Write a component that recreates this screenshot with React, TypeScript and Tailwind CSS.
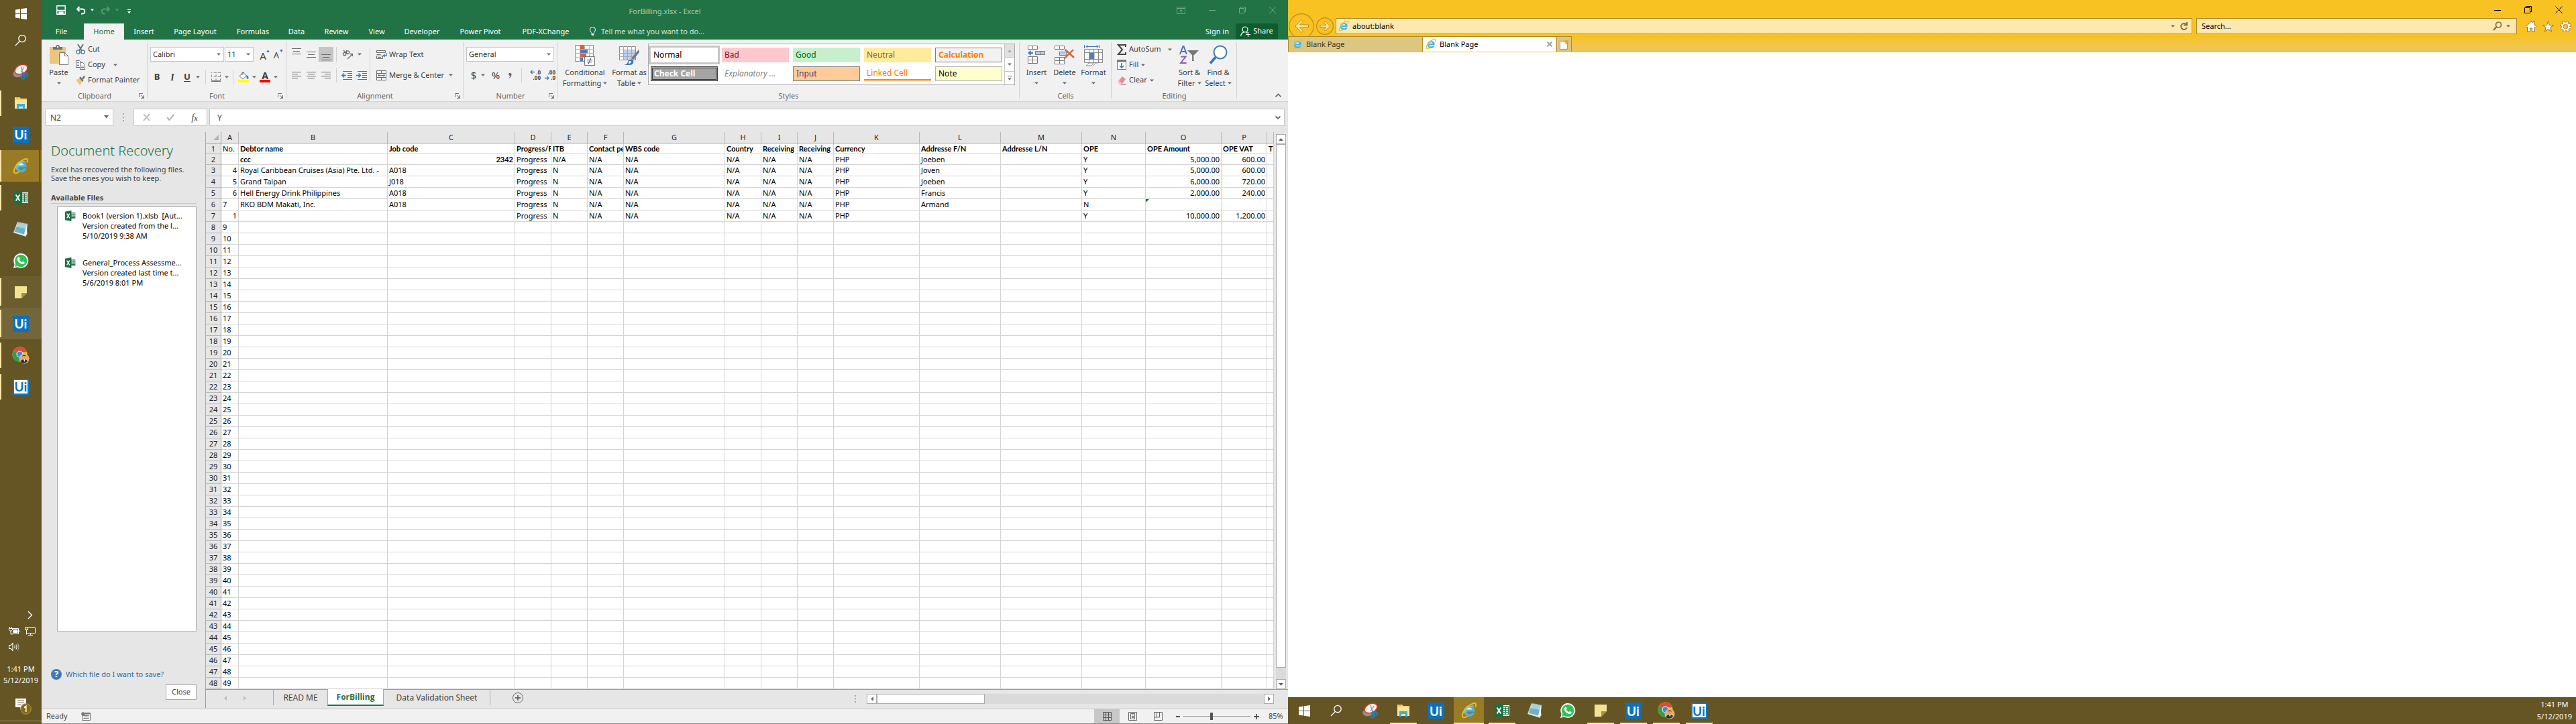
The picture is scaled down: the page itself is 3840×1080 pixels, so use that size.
import React from "react";

/* ---------- small drawing helpers ---------- */

type IconProps = { className?: string };

const Caret = ({ className = "" }: IconProps) => (
  <svg className={`shrink-0 ${className}`} width="6" height="4" viewBox="0 0 6 4" fill="#6a6a6a">
    <path d="M0 .5h6L3 3.8z" />
  </svg>
);

const VSep = ({ className = "" }: IconProps) => <span className={`w-px shrink-0 bg-[#d2d2d2] ${className}`} />;

const Launcher = () => (
  <svg width="8" height="8" viewBox="0 0 8 8" fill="none" stroke="#777" strokeWidth="1">
    <path d="M.5 6V.5H6M3 3l3 3M7.5 3v4.5H3" />
    <path d="M7.5 4.5v3h-3z" fill="#777" />
  </svg>
);

const WindowsLogo = ({ className = "" }: IconProps) => (
  <svg className={className} width="17" height="17" viewBox="0 0 17 17" fill="#fff">
    <path d="M0 2.4 7 1.4v6.6H0zM8 1.3 17 0v8H8zM0 9h7v6.6l-7-1zM8 9h9v8l-9-1.3z" />
  </svg>
);

const SearchGlyph = () => (
  <svg width="18" height="18" viewBox="0 0 18 18" fill="none" stroke="#fff" strokeWidth="1.3">
    <circle cx="11" cy="6.5" r="5.2" />
    <path d="M7.4 10.4 1 17" />
  </svg>
);

const SnipIcon = () => (
  <svg width="24" height="24" viewBox="0 0 24 24">
    <ellipse cx="10" cy="13" rx="10" ry="6.5" transform="rotate(-25 10 13)" fill="#9a8f86" />
    <ellipse cx="12.5" cy="8.5" rx="10" ry="6.5" transform="rotate(-25 12.500 8.500)" fill="#f5f2f2" stroke="#d8392f" strokeWidth="1.6" />
    <path d="M12 4l4 12M17 5l-5 8" stroke="#8b9099" strokeWidth="1.2" />
    <circle cx="15" cy="20.500" r="2.300" fill="none" stroke="#2a79b8" strokeWidth="2" />
    <circle cx="20" cy="16.500" r="2.300" fill="none" stroke="#2a79b8" strokeWidth="2" />
    <path d="M14 13.500l4 2M13.500 14.500l1.500 3" stroke="#2a79b8" strokeWidth="2" />
  </svg>
);

const FolderIcon = () => (
  <svg width="20" height="20" viewBox="0 0 20 20">
    <path d="M1 1h7l2 2h9v14H1z" fill="#f3d573" />
    <path d="M3 1h4v2H3z" fill="#f6b80e" />
    <path d="M1 5h18v13H1z" fill="#fde49a" />
    <path d="M4 19v-8h12v8h-3v-4H7v4z" fill="#31b1ea" />
  </svg>
);

const UiIcon = ({ inverse = false }: { inverse?: boolean }) => (
  <span
    className={
      inverse
        ? "flex h-6 w-6 items-center justify-center border-2 border-[#0a78c8] bg-white font-['Lato'] text-[19px] font-bold leading-none text-[#0a72bd]"
        : "flex h-6 w-6 items-center justify-center bg-[#0a72bd] font-['Lato'] text-[19px] font-bold leading-none text-white"
    }
  >
    Ui
  </span>
);

const IeIcon = ({ size = 24 }: { size?: number }) => (
  <svg className="shrink-0" width={size} height={size} viewBox="0 0 24 24" fill="none">
    <path d="M20.500 13.500H8.300c.4 2.400 2 3.800 4.300 3.800 1.700 0 3-.7 3.800-2h4c-1.200 3.500-4 5.600-7.800 5.600-5 0-8.400-3.400-8.400-8.200 0-4.900 3.500-8.500 8.400-8.500 5 0 8.300 3.500 7.900 9.300z" fill="#45b4e6" />
    <path d="M8.400 10.600h7.800c-.3-2-1.700-3.100-3.800-3.100-2.200 0-3.600 1.200-4 3.100z" fill="#e8f6fd" />
    <path d="M5.500 15.500C7.500 9.500 12 5 18.500 4.800" stroke="#9fdcf5" strokeWidth="1" />
    <path d="M3.200 22.200C0 20.500 2.500 13 8.500 7.200 14 2 20.500-.3 22 2c.6 1 .2 2.700-.8 4.600" stroke="#f4c01c" strokeWidth="1.900" />
    <path d="M3.200 22.200c1.600.8 4.200-.5 6.200-1.900" stroke="#f4c01c" strokeWidth="1.700" />
  </svg>
);

const ExcelIcon = ({ size = 22 }: { size?: number }) => (
  <svg className="shrink-0" width={size} height={size} viewBox="0 0 22 22">
    <path d="M11 3h11v16H11z" fill="#fff" />
    <path d="M12.500 4.500h8.500v13h-8.500z" fill="#217346" />
    <path d="M13 6h3v1.500h-3zM17 6h3v1.500h-3zM13 9h3v1.500h-3zM17 9h3v1.500h-3zM13 12h3v1.500h-3zM17 12h3v1.500h-3zM13 15h3v1.500h-3zM17 15h3v1.500h-3z" fill="#fff" />
    <path d="M0 2.300 13 0v22L0 19.700z" fill="#1d6f42" />
    <path d="M3.600 6.500 9.400 15.500M9.400 6.500 3.600 15.500" stroke="#fff" strokeWidth="1.900" />
  </svg>
);

const NotepadIcon = () => (
  <svg width="24" height="24" viewBox="0 0 24 24">
    <path d="M7 1 22 4 20 23 1 17z" fill="#dfe6e8" />
    <path d="M8 2.500 20.500 5 17 19.500 2.500 15.500z" fill="#6fb2c4" />
    <path d="M8 2.500 20.500 5 19 11 5.500 8.500z" fill="#a3d3de" />
    <path d="M7.500 1.200 21.500 4" stroke="#8d8d8d" strokeWidth="1.400" strokeDasharray="1.500 1" />
    <path d="M20.500 5 21.500 20 17 19.500z" fill="#f6f4ee" />
  </svg>
);

const WhatsAppIcon = () => (
  <svg width="24" height="24" viewBox="0 0 24 24">
    <path d="M1 23l1.600-5.800A11 11 0 1 1 7 21.600z" fill="#fff" />
    <circle cx="12.200" cy="11.900" r="9.200" fill="#2fc355" />
    <path d="M3 21l1.200-4.200 3 3z" fill="#2fc355" />
    <path d="M8.800 6.600c.5-.1.900 0 1.100.5l.8 1.900c.1.300 0 .6-.9 1.600.9 1.700 2.200 2.900 4 3.600.9-1.200 1.100-1.400 1.500-1.200l2 1c.4.2.5.4.4.9-.2 1.500-1.600 2.400-3 2.200-4-.6-7.500-4.200-8-7.200-.2-1.500 1-3 2.100-3.300z" fill="#fff" />
  </svg>
);

const StickyIcon = () => (
  <svg width="18" height="18" viewBox="0 0 18 18">
    <path d="M0 0h18v10l-8 8H0z" fill="#f2e493" />
    <path d="M18 10h-8v8z" fill="#a09153" />
  </svg>
);

const ChromeIcon = () => (
  <svg width="26" height="26" viewBox="0 0 26 26">
    <circle cx="11.500" cy="11.500" r="11" fill="#f6c21c" />
    <path d="M11.500 11.500 2 6A11 11 0 0 1 22 8.300H11.500z" fill="#dd4b3e" />
    <path d="M2 6a11 11 0 0 0 8.500 16.400L15 14z" fill="#2ba24c" />
    <circle cx="11.500" cy="11.500" r="5" fill="#fff" />
    <circle cx="11.500" cy="11.500" r="4" fill="#4285f4" />
    <circle cx="18" cy="18" r="7.600" fill="#e7b163" />
    <path d="M12.500 23c.8-3 2.700-4 5.500-4s4 1 5 3a7.600 7.600 0 0 1-10.500 1z" fill="#22304f" />
    <path d="M17 19h2.500l-1 4z" fill="#fff" />
    <circle cx="18" cy="15.500" r="2.700" fill="#d6a184" />
    <path d="M15.200 15c0-3 5.600-3 5.600 0l-1-1h-3.600z" fill="#2c2320" />
  </svg>
);

/* ---------- task bars ---------- */

type TaskItem = { name: string; icon: React.ReactNode; open?: boolean; active?: boolean; tint?: string };

const tasks: TaskItem[] = [
  { name: "Snipping Tool", icon: <SnipIcon /> },
  { name: "File Explorer", icon: <FolderIcon />, open: true },
  { name: "UiPath Studio", icon: <UiIcon /> },
  { name: "Internet Explorer", icon: <IeIcon />, open: true, active: true },
  { name: "Excel", icon: <ExcelIcon />, open: true },
  { name: "Notepad", icon: <NotepadIcon /> },
  { name: "WhatsApp", icon: <WhatsAppIcon /> },
  { name: "Sticky Notes", icon: <StickyIcon />, open: true, tint: "bg-[#6c5d2f]" },
  { name: "UiPath", icon: <UiIcon />, open: true, tint: "bg-[#73663a]" },
  { name: "Chrome", icon: <ChromeIcon />, open: true },
  { name: "UiPath Robot", icon: <UiIcon inverse />, open: true },
];

const SideTaskbar = () => (
  <nav className="flex w-[62px] shrink-0 flex-col bg-[#655524] text-white">
    <button aria-label="Start" className="flex h-10 items-center justify-center">
      <WindowsLogo />
    </button>
    <button aria-label="Search" className="mb-[3px] flex h-10 items-center justify-center">
      <SearchGlyph />
    </button>
    {tasks.map((t) => (
      <button
        key={t.name}
        aria-label={t.name}
        className={`flex h-[47px] items-center ${t.active ? "bg-[#997a25]" : t.tint ?? ""}`}
      >
        <span className={`w-[2px] ${t.open ? "bg-[#fde7ab]" : ""} ${t.active ? "h-[47px]" : t.tint ? "h-[41px]" : "h-[38px]"}`} />
        <span className={`flex flex-1 items-center justify-center ${t.active ? "pl-[2px]" : "pr-[2px]"}`}>{t.icon}</span>
        {t.active && <span className="h-[47px] w-[4px] border-l border-[#57481c] bg-[#806722]" />}
      </button>
    ))}
    <div className="mt-auto flex flex-col">
      <button aria-label="Show hidden icons" className="flex h-6 items-center justify-end pr-[13px]">
        <svg width="8" height="13" viewBox="0 0 8 13" fill="none" stroke="#fff" strokeWidth="1.300">
          <path d="M1 1l5.500 5.500L1 12" />
        </svg>
      </button>
      <div className="flex h-6 items-center gap-2 pl-[13px]">
        <svg width="16" height="12" viewBox="0 0 16 12" fill="none" stroke="#fff">
          <path d="M5.500 2.500h9v8h-9M1.500 0v2.500M4.500 0v2.500M.5 2.500h5v2L4 6H2L.5 4.500zM3 6v5h3" />
          <path d="M7 4.500h6v4H7z" fill="#fff" />
          <path d="M15.500 5v3" />
        </svg>
        <svg width="16" height="13" viewBox="0 0 16 13" fill="none" stroke="#fff">
          <path d="M5 1.500h10.500v8H3M.5.500h4v4h-4zM2.500 4.500v7M8.500 9.500v3M5 12.500h7" />
        </svg>
      </div>
      <div className="flex h-6 items-center pl-[13px]">
        <svg width="17" height="14" viewBox="0 0 17 14" fill="none" stroke="#fff" strokeWidth="1.100">
          <path d="M.5 4.500h2.500L6 1.500v11L3 9.500H.5zM8.500 5q1.500 2 0 4M10.700 3.500q3 3.500 0 7" />
          <path d="M13 1.500q4 5.500 0 11" opacity=".5" />
        </svg>
      </div>
      <div className="mt-3 text-center text-[11px] leading-[17px]">
        <div>1:41 PM</div>
        <div>5/12/2019</div>
      </div>
      <button aria-label="Notifications" className="mt-[17px] mb-[9px] flex h-[26px] items-center justify-center pl-2">
        <svg width="24" height="25" viewBox="0 0 24 25">
          <path d="M0 1h16v13H10l-3 3v-3H0z" fill="#fff" />
          <path d="M3 4.500h10M3 7.500h10M3 10.500h6" stroke="#655524" />
          <circle cx="15.500" cy="16.500" r="7.800" fill="#85690f" stroke="#a89a6c" />
          <path d="M13 14.500l2.800-2v8.500" fill="none" stroke="#fff" strokeWidth="1.700" />
        </svg>
      </button>
      <div className="h-[5px] border-t border-[#a39a7c]" />
    </div>
  </nav>
);

const BottomTaskbar = () => (
  <nav className="flex h-10 shrink-0 bg-[#655524] text-white">
    <button aria-label="Start" className="flex w-12 items-center justify-center">
      <WindowsLogo />
    </button>
    <button aria-label="Search" className="mr-[2px] flex w-12 items-center justify-center">
      <SearchGlyph />
    </button>
    {tasks.map((t) => (
      <button key={t.name} aria-label={t.name} className="flex w-[49px] flex-col items-center">
        <span className={`flex flex-1 items-center justify-center pt-[2px] ${t.active ? "w-[45px] bg-[#997a25]" : ""}`}>{t.icon}</span>
        <span className={`h-[2px] ${t.open ? "bg-[#fde7ab]" : ""} ${t.active ? "w-[45px]" : "w-10"}`} />
      </button>
    ))}
    <div className="ml-auto pr-[6px] pt-[2px] text-center text-[11px] leading-[18px]">
      <div>1:41 PM</div>
      <div>5/12/2019</div>
    </div>
  </nav>
);

/* ---------- Excel: title and ribbon ---------- */

const TitleBar = () => (
  <div className="grid h-[35px] grid-cols-[1fr_auto_1fr] items-center bg-[#217346]">
    <div className="flex items-center pb-[5px] pl-[22px]">
      <button aria-label="Save">
        <svg width="14" height="14" viewBox="0 0 14 14" fill="none" stroke="#fff" strokeWidth="1.400">
          <path d="M.8.800h12.400v12.400H.8zM.8 7.500h12.400" />
          <path d="M4 13v-3h6v3" fill="#fff" />
        </svg>
      </button>
      <button aria-label="Undo" className="ml-[15px] flex items-center gap-[7px]">
        <svg width="15" height="13" viewBox="0 0 15 13" fill="none" stroke="#fff" strokeWidth="2">
          <path d="M5.500 1 2 4.500 5.500 8M2 4.500h7.500c5 0 5 7 0 7H8" />
        </svg>
        <svg width="5" height="4" viewBox="0 0 6 4" fill="#fff"><path d="M0 0h6L3 4z" /></svg>
      </button>
      <button aria-label="Redo" className="ml-[10px] flex items-center gap-[7px] opacity-25">
        <svg width="15" height="13" viewBox="0 0 15 13" fill="none" stroke="#fff" strokeWidth="2">
          <path d="M9.500 1 13 4.500 9.500 8M13 4.500H5.500c-5 0-5 7 0 7H7" />
        </svg>
        <svg width="5" height="4" viewBox="0 0 6 4" fill="#fff"><path d="M0 0h6L3 4z" /></svg>
      </button>
      <button aria-label="Customize toolbar" className="ml-[13px] pt-1">
        <svg width="5" height="7" viewBox="0 0 5 7" fill="#fff"><path d="M0 0h5v1H0zM0 3h5L2.500 6.500z" /></svg>
      </button>
    </div>
    <div className="text-[11px] text-[#a3cbb2]">ForBilling.xlsx - Excel</div>
    <div className="flex items-center justify-end gap-[35px] pb-[5px] pr-[18px]">
      <button aria-label="Ribbon display options">
        <svg width="13" height="11" viewBox="0 0 13 11" fill="none" stroke="#75a888"><path d="M.5.500h12v10H.5zM.5 2.500h12M6.500 9V4.500M4.500 6.500l2-2 2 2" /></svg>
      </button>
      <button aria-label="Minimize">
        <svg width="10" height="10" viewBox="0 0 10 10" stroke="#75a888"><path d="M0 5.500h10" /></svg>
      </button>
      <button aria-label="Restore">
        <svg width="10" height="10" viewBox="0 0 10 10" fill="none" stroke="#75a888"><path d="M.5 2.500h7v7h-7zM2.500 2.500v-2h7v7h-2" /></svg>
      </button>
      <button aria-label="Close">
        <svg width="10" height="10" viewBox="0 0 10 10" stroke="#75a888"><path d="M0 0l10 10M10 0 0 10" /></svg>
      </button>
    </div>
  </div>
);

const tabs: [string, string][] = [
  ["Insert", "w-[59px]"],
  ["Page Layout", "w-[94px]"],
  ["Formulas", "w-[78px]"],
  ["Data", "w-[52px]"],
  ["Review", "w-[67px]"],
  ["View", "w-[53px]"],
  ["Developer", "w-[82px]"],
  ["Power Pivot", "w-[92px]"],
  ["PDF-XChange", "w-[103px]"],
];

const TabRow = () => (
  <div className="flex h-6 items-center bg-[#217346] text-[11px] text-white">
    <button className="w-[59px]">File</button>
    <button className="ml-1 h-6 w-[60px] bg-[#f1f1f1] text-[#217346]">Home</button>
    {tabs.map(([name, w]) => (
      <button key={name} className={`whitespace-nowrap ${w}`}>{name}</button>
    ))}
    <button className="ml-[14px] flex items-center gap-2 whitespace-nowrap text-[#d3e5da]">
      <svg width="9" height="14" viewBox="0 0 9 14" fill="none" stroke="#fff">
        <path d="M2.500 9.500C2.500 7.500.5 6.800.5 4.300a4 4 0 0 1 8 0c0 2.500-2 3.200-2 5.200zM2.500 11.500h4M3 13.500h3" />
      </svg>
      Tell me what you want to do...
    </button>
    <button className="ml-auto mr-[10px]">Sign in</button>
    <button className="mb-px mr-[15px] flex h-[23px] w-[63px] items-center justify-center gap-1 bg-[#0e5c2f]">
      <svg width="15" height="16" viewBox="0 0 15 16" fill="none" stroke="#fff" strokeWidth="1.200">
        <circle cx="7" cy="5" r="4" />
        <path d="M.7 15c0-3.500 1.800-5 4.300-6M9 9l1.500 1.500M8 12.500h7M11.500 9v7" />
      </svg>
      Share
    </button>
  </div>
);

const Group = ({
  label,
  className,
  launcher,
  children,
}: {
  label: string;
  className: string;
  launcher?: boolean;
  children: React.ReactNode;
}) => (
  <section className={`relative flex shrink-0 flex-col ${className}`}>
    <div className="flex h-[76px]">{children}</div>
    <div className="grid h-4 grid-cols-[1fr_auto_1fr] items-center text-[#666]">
      <span />
      <span>{label}</span>
      <span className="flex justify-end pr-[5px]">{launcher && <Launcher />}</span>
    </div>
    <span className="absolute right-0 top-1 h-[84px] w-px bg-[#d2d2d2]" />
  </section>
);

const BigButton = ({ icon, lines, className }: { icon: React.ReactNode; lines: [string, string]; className: string }) => (
  <button className={`flex shrink-0 flex-col items-center whitespace-nowrap pt-2 leading-4 ${className}`}>
    <span className="flex h-[33px] items-start">{icon}</span>
    <span>{lines[0]}</span>
    <span className="flex items-center gap-[3px]">
      {lines[1]}
      <Caret className={lines[1] ? "" : "mt-[6px]"} />
    </span>
  </button>
);

const Lines = ({ d }: { d: string }) => (
  <svg width="14" height="11" viewBox="0 0 14 11" stroke="#6b6b6b"><path d={d} /></svg>
);

const Clipboard = () => (
  <Group label="Clipboard" launcher className="w-[158px]">
    <BigButton
      className="w-[51px]"
      lines={["Paste", ""]}
      icon={
        <svg width="28" height="31" viewBox="0 0 28 31">
          <path d="M0 3h24v25H0z" fill="#ecc57e" />
          <path d="M5 3h4a3 3 0 0 1 6 0h4v4H5z" fill="#717171" />
          <circle cx="12" cy="3" r="1.200" fill="#fff" />
          <path d="M14.500 11.500h8l5 5v13h-13z" fill="#fff" stroke="#777" />
          <path d="M22.500 11.500v5h5" fill="none" stroke="#777" />
        </svg>
      }
    />
    <div className="flex flex-col pt-[3px]">
      <button className="flex h-[23px] items-center gap-1">
        <svg width="14" height="15" viewBox="0 0 14 15" fill="none">
          <path d="M3 0l6 9.500M11 0 5 9.500" stroke="#6b6b6b" strokeWidth="1.800" />
          <circle cx="3.500" cy="11.500" r="2.600" stroke="#3f7ab5" strokeWidth="1.300" />
          <circle cx="10.500" cy="11.500" r="2.600" stroke="#3f7ab5" strokeWidth="1.300" />
        </svg>
        Cut
      </button>
      <button className="flex h-[23px] items-center gap-1">
        <svg width="14" height="14" viewBox="0 0 14 14" fill="#fff" stroke="#6b6b6b">
          <path d="M.5.500h5l2 2v8h-7z" />
          <path d="M6.500 3.500h4l3 3v7h-7z" />
          <path d="M2 3.500h3M2 5.500h3M2 7.500h3M8 8.500h4M8 10.500h4" stroke="#3f7ab5" />
        </svg>
        Copy
        <Caret className="ml-2" />
      </button>
      <button className="flex h-[23px] items-center gap-1 whitespace-nowrap">
        <svg width="14" height="14" viewBox="0 0 14 14">
          <path d="M0 6l5-2 5 5-4 5z" fill="#ecc57e" />
          <path d="M5 3l2-1.500L11.500 7 10 9z" fill="#6b6b6b" />
          <path d="M9 4l3-4 2 1.500-3 4z" fill="#6b6b6b" />
        </svg>
        Format Painter
      </button>
    </div>
  </Group>
);

const selectCls =
  "h-[22px] w-full appearance-none border border-[#c6c6c6] bg-white pl-[3px] text-[#333] outline-none";

const Dropdown = ({ label, value, className }: { label: string; value: string; className: string }) => (
  <label className={`relative block ${className}`}>
    <select aria-label={label} className={selectCls} defaultValue={value}>
      <option>{value}</option>
    </select>
    <Caret className="pointer-events-none absolute right-[5px] top-[9px]" />
  </label>
);

const FontGroup = () => (
  <Group label="Font" launcher className="w-[207px]">
    <div className="flex flex-col gap-[9px] pt-[11px]">
      <div className="flex pl-1">
        <Dropdown label="Font" value="Calibri" className="w-[110px]" />
        <Dropdown label="Font size" value="11" className="ml-px w-[43px]" />
        <button aria-label="Increase font size" className="relative ml-1 w-5 text-[15px] leading-[24px]">
          A
          <svg className="absolute right-0 top-1" width="5" height="4" viewBox="0 0 5 4" fill="#3f7ab5"><path d="M0 4h5L2.500 0z" /></svg>
        </button>
        <button aria-label="Decrease font size" className="relative w-5 text-[13px] leading-[25px]">
          A
          <svg className="absolute right-0 top-1" width="5" height="4" viewBox="0 0 5 4" fill="#3f7ab5"><path d="M0 0h5L2.500 4z" /></svg>
        </button>
      </div>
      <div className="flex h-[22px] items-center pl-[2px]">
        <button className="w-6 text-[13px] font-bold">B</button>
        <button className="w-[22px] font-['Liberation_Serif'] text-[14px] font-bold italic">I</button>
        <button className="w-[22px] text-[13px] font-bold underline underline-offset-2">U</button>
        <Caret className="mx-[2px]" />
        <VSep className="mx-[6px] h-[22px]" />
        <button aria-label="Borders" className="flex w-[18px] justify-center">
          <svg width="14" height="14" viewBox="0 0 14 14" fill="none" stroke="#777">
            <path d="M.5 0v12M7 0v12M13.500 0v12M0 .5h14M0 6.500h14" strokeDasharray="1 1" />
            <path d="M0 13h14" stroke="#444" strokeWidth="1.500" />
          </svg>
        </button>
        <Caret className="mx-[4px]" />
        <VSep className="mx-[2px] h-[22px]" />
        <button aria-label="Fill color" className="flex w-[26px] justify-center">
          <svg width="16" height="16" viewBox="0 0 16 16">
            <path d="M0 12h16v4H0z" fill="#ffff00" />
            <path d="M2 6.500 7.500 1l5 5L7 11z" fill="#fff" stroke="#6b6b6b" />
            <path d="M6 5V1q1.500-1.500 2.500 0v3" fill="none" stroke="#6b6b6b" />
            <path d="M12 5q4 1 3.500 5l-2.500 1z" fill="#3f7ab5" />
          </svg>
        </button>
        <Caret />
        <button aria-label="Font color" className="flex w-[26px] flex-col items-center text-[14px] font-bold leading-[12px]">
          A
          <span className="h-1 w-4 bg-[#ff0000]" />
        </button>
        <Caret />
      </div>
    </div>
  </Group>
);

const AlignGroup = () => (
  <Group label="Alignment" launcher className="w-[264px]">
    <div className="flex gap-[9px] pl-[4px] pt-[11px]">
      <div className="flex flex-col gap-[9px]">
        <div className="flex h-[22px] items-center">
          <button aria-label="Top align" className="flex h-[22px] w-[22px] items-start justify-center pt-[2px]"><Lines d="M0 .5h14M2 4.500h10M0 8.500h14" /></button>
          <button aria-label="Middle align" className="flex h-[22px] w-[22px] items-center justify-center"><Lines d="M0 1.500h14M2 5.500h10M0 9.500h14" /></button>
          <button aria-label="Bottom align" className="flex h-[22px] w-[22px] items-end justify-center bg-[#c5c5c5] pb-[2px]"><Lines d="M0 2.500h14M2 6.500h10M0 10.500h14" /></button>
          <VSep className="mx-1 h-[22px]" />
          <button aria-label="Orientation" className="flex items-center gap-[7px] pl-1">
            <svg width="16" height="15" viewBox="0 0 16 15" fill="none" stroke="#6b6b6b" strokeWidth="1.300">
              <circle cx="3.500" cy="6.500" r="2.200" />
              <path d="M2 1l6 6M6 3l1-2M8 14l7-7M12 6.500h3.500V10" />
              <circle cx="8.500" cy="4" r="2.200" />
            </svg>
            <Caret />
          </button>
        </div>
        <div className="flex h-[22px] items-center">
          <button aria-label="Align left" className="flex w-[22px] justify-center"><Lines d="M0 .5h14M0 3.500h9M0 6.500h14M0 9.500h9" /></button>
          <button aria-label="Center" className="flex w-[22px] justify-center"><Lines d="M0 .5h14M2 3.500h10M0 6.500h14M2 9.500h10" /></button>
          <button aria-label="Align right" className="flex w-[22px] justify-center"><Lines d="M0 .5h14M5 3.500h9M0 6.500h14M5 9.500h9" /></button>
          <VSep className="mx-1 h-[22px]" />
          <button aria-label="Decrease indent" className="flex w-[22px] justify-center">
            <svg width="16" height="13" viewBox="0 0 16 13" fill="none" stroke="#6b6b6b"><path d="M2 .5h14M9 3.500h7M9 6.500h7M9 9.500h7M2 12.500h14" /><path d="M7 6.500H1M4 3.500 1 6.500l3 3" stroke="#3f7ab5" strokeWidth="1.600" /></svg>
          </button>
          <button aria-label="Increase indent" className="flex w-[22px] justify-center">
            <svg width="16" height="13" viewBox="0 0 16 13" fill="none" stroke="#6b6b6b"><path d="M2 .5h14M9 3.500h7M9 6.500h7M9 9.500h7M2 12.500h14" /><path d="M0 6.500h6M3.500 3.500l3 3-3 3" stroke="#3f7ab5" strokeWidth="1.600" /></svg>
          </button>
        </div>
      </div>
      <VSep className="-ml-2 h-[53px]" />
      <div className="flex flex-col gap-[9px]">
        <button className="flex h-[22px] items-center gap-[3px]">
          <svg width="16" height="15" viewBox="0 0 16 15" fill="none" stroke="#6b6b6b">
            <path d="M.5 1.500h13v3H.5zM.5 9.500h9v4h-9zM.5 7.500h6M2 11.500h5" />
            <path d="M15 5v4h-4M12.500 7 10.500 9l2 2" stroke="#3f7ab5" strokeWidth="1.300" />
          </svg>
          Wrap Text
        </button>
        <button className="flex h-[22px] items-center gap-[3px] whitespace-nowrap">
          <svg width="16" height="15" viewBox="0 0 16 15" fill="none" stroke="#6b6b6b">
            <path d="M.5.500h14v14H.5zM.5 4.500h14M.5 10.500h14M7.500 0v4M7.500 11v4" />
            <path d="M2.500 7.500h10M4.500 5.500l-2 2 2 2M10.500 5.500l2 2-2 2" stroke="#3f7ab5" />
          </svg>
          Merge &amp; Center
          <Caret className="ml-1" />
        </button>
      </div>
    </div>
  </Group>
);

const NumberGroup = () => (
  <Group label="Number" launcher className="w-[140px]">
    <div className="flex flex-col gap-[9px] pl-1 pt-[11px]">
      <Dropdown label="Number format" value="General" className="w-[131px]" />
      <div className="flex h-[22px] items-center text-[15px]">
        <button className="w-[22px]">$</button>
        <Caret />
        <button className="w-[32px]">%</button>
        <button aria-label="Comma style" className="flex w-[10px] justify-center">
          <svg width="6" height="9" viewBox="0 0 6 9" fill="#6b6b6b"><path d="M1 2.500a2.300 2.300 0 1 1 4.500 1Q5 7 1.500 9 3 7 3 5 1 4.500 1 2.500z" /></svg>
        </button>
        <VSep className="mx-3 h-[22px]" />
        {["left", "right"].map((dir) => (
          <button key={dir} aria-label={dir === "left" ? "Increase decimal" : "Decrease decimal"} className="relative mr-[6px] flex w-4 flex-col items-end text-[8px] font-bold leading-[8px]">
            <span>{dir === "left" ? ".0" : ".00"}</span>
            <span>{dir === "left" ? ".00" : ".0"}</span>
            <svg className={dir === "left" ? "absolute left-0 top-0" : "absolute bottom-0 left-0"} width="7" height="7" viewBox="0 0 7 7" fill="none" stroke="#3f7ab5" strokeWidth="1.300">
              <path d={dir === "left" ? "M7 3.500H1M3.500 1 1 3.500 3.500 6" : "M0 3.500h6M3.500 1 6 3.500 3.500 6"} />
            </svg>
          </button>
        ))}
      </div>
    </div>
  </Group>
);

const styleCells: [string, string][] = [
  ["Normal", "bg-white text-black outline outline-[3px] outline-[#c6c6c6]"],
  ["Bad", "bg-[#ffc7ce] text-[#9c0006]"],
  ["Good", "bg-[#c6efce] text-[#006100]"],
  ["Neutral", "bg-[#ffeb9c] text-[#9c6500]"],
  ["Calculation", "border border-[#7f7f7f] bg-[#f2f2f2] font-bold text-[#fa7d00] text-[11px]"],
  ["Check Cell", "border-[3px] border-double border-[#3f3f3f] bg-[#a5a5a5] pl-[2px] text-[11px] font-bold text-white"],
  ["Explanatory ...", "italic text-[#7f7f7f]"],
  ["Input", "border border-[#7f7f7f] bg-[#ffcc99] text-[#3f3f76]"],
  ["Linked Cell", "border-b-[3px] border-double border-[#ff8001] text-[#fa7d00]"],
  ["Note", "border border-[#b2b2b2] bg-[#ffffcc] text-black"],
];

const StylesGroup = () => (
  <Group label="Styles" className="w-[689px]">
    <BigButton
      className="w-[82px]"
      lines={["Conditional", "Formatting"]}
      icon={
        <svg width="30" height="31" viewBox="0 0 30 31">
          <path d="M.5.500h27v24H.5z" fill="#fff" stroke="#8a8a8a" />
          <path d="M7.500 0v25M14.500 0v25M21.500 0v25M0 6.500h28M0 12.500h28M0 18.500h28" stroke="#b5b5b5" />
          <path d="M8 1h6v5H8zM8 13h9v5H8z" fill="#d9603b" />
          <path d="M8 7h11v5H8zM8 19h4v5H8z" fill="#4a7fba" />
          <path d="M14.500 17.500h15v13h-15z" fill="#fff" stroke="#777" />
          <path d="M18 22.500h8M18 25.500h8M24 19.500l-4 9" stroke="#444" />
        </svg>
      }
    />
    <BigButton
      className="w-[50px]"
      lines={["Format as", "Table"]}
      icon={
        <svg width="30" height="31" viewBox="0 0 30 31">
          <path d="M.5 2.500h24v20H.5z" fill="#fff" stroke="#8a8a8a" />
          <path d="M7 8h17v14H7z" fill="#bdd0ea" />
          <path d="M6.500 2v21M12.500 2v21M18.500 2v21M0 7.500h25M0 12.500h25M0 17.500h25" stroke="#a8a8a8" />
          <path d="M29 7l1 4-9 11-3-2z" fill="#777" />
          <path d="M7 30q6-1 6-6 4-4 8-1 2 7-6 7z" fill="#3f7ab5" />
          <path d="M14 25q2-2 4 0-1 3-4 3z" fill="#fff" />
        </svg>
      }
    />
    <div className="ml-[3px] mt-[6px] flex h-[62px] border border-[#ababab] bg-white">
      <div className="grid grid-cols-5 content-start gap-[6px] px-[3px] pt-[5px]">
        {styleCells.map(([name, cls]) => (
          <button key={name} className={`h-[22px] w-[100px] whitespace-nowrap pl-1 text-left text-[12px] leading-none ${cls}`}>
            {name}
          </button>
        ))}
      </div>
      <div className="flex w-[15px] flex-col divide-y divide-[#c6c6c6] border-l border-[#c6c6c6]">
        <button aria-label="Scroll styles up" className="flex flex-1 items-center justify-center bg-[#e1e1e1]">
          <svg width="6" height="4" viewBox="0 0 6 4" fill="#ababab"><path d="M0 4h6L3 0z" /></svg>
        </button>
        <button aria-label="Scroll styles down" className="flex flex-1 items-center justify-center"><Caret /></button>
        <button aria-label="More styles" className="flex flex-1 flex-col items-center justify-center gap-[2px]">
          <span className="h-px w-[7px] bg-[#6a6a6a]" />
          <Caret />
        </button>
      </div>
    </div>
  </Group>
);

const CellsGroup = () => (
  <Group label="Cells" className="w-[137px]">
    <BigButton
      className="w-[50px]"
      lines={["Insert", ""]}
      icon={
        <svg width="26" height="29" viewBox="0 0 26 29" fill="#fff" stroke="#777">
          <path d="M.5 1.500h14v5H.5zM7.500 1.500v5M.5 17.500h14v10H.5zM7.500 17.500v10M.5 22.500h14" />
          <path d="M11.500 9.500h14v5h-14zM18.500 9.500v5" fill="#bdd0ea" />
          <path d="M8 12H2M4.500 9 1.500 12l3 3" stroke="#3f7ab5" strokeWidth="1.800" fill="none" />
        </svg>
      }
    />
    <BigButton
      className="w-[34px]"
      lines={["Delete", ""]}
      icon={
        <svg width="30" height="29" viewBox="0 0 30 29" fill="#fff" stroke="#777">
          <path d="M.5 1.500h14v5H.5zM7.500 1.500v5M.5 18.500h14v10H.5zM7.500 18.500v10M.5 23.500h14" />
          <path d="M7.500 10.500h10v5h-10z" fill="#bdd0ea" />
          <path d="M16 7l13 12M28 7 15 20" stroke="#d9603b" strokeWidth="2.400" />
        </svg>
      }
    />
    <BigButton
      className="w-[52px]"
      lines={["Format", ""]}
      icon={
        <svg width="28" height="32" viewBox="0 0 28 32" fill="none" stroke="#8a8a8a">
          <path d="M.5 6.500h27v20H.5z" fill="#fff" />
          <path d="M7.500 6v21M14.500 6v21M21.500 6v21M0 11.500h28M0 21.500h28" />
          <path d="M8 12h7v9H8z" fill="#4a7fba" />
          <path d="M3 31l4-4h7l-3 4zM14 31l3-4h4" fill="#fff" />
          <path d="M.5 0v5M23.500 0v5M3 2.500h18M5.500 0 3 2.500 5.500 5M18.500 0 21 2.500 18.500 5" stroke="#3f7ab5" />
        </svg>
      }
    />
  </Group>
);

const EditingGroup = () => (
  <Group label="Editing" className="w-[187px]">
    <div className="flex w-[95px] flex-col pl-2 pt-[3px]">
      <button className="flex h-[23px] items-center gap-1">
        <svg width="14" height="16" viewBox="0 0 14 16" fill="none" stroke="#444" strokeWidth="2"><path d="M13 4V1H2l6 7-6 7h11v-3" /></svg>
        AutoSum
        <Caret className="ml-[6px]" />
      </button>
      <button className="flex h-[23px] items-center gap-1">
        <svg width="14" height="15" viewBox="0 0 14 15" fill="#fff" stroke="#777"><path d="M.5.500h13v14H.5z" /><path d="M0 2h14" strokeWidth="3" /><path d="M7 5v7M4 9l3 3 3-3" stroke="#3f7ab5" strokeWidth="1.700" fill="none" /></svg>
        Fill
        <Caret />
      </button>
      <button className="flex h-[23px] items-center gap-1">
        <svg width="14" height="14" viewBox="0 0 14 14"><path d="M1 9 8 1l5 4-6 8H4z" fill="#e68a9c" /><path d="M1 9l2-2 5 5-1 1.500H4z" fill="#f4c4cd" /><path d="M6 13.500h8" stroke="#777" /></svg>
        Clear
        <Caret />
      </button>
    </div>
    <BigButton
      className="w-[42px]"
      lines={["Sort &", "Filter"]}
      icon={
        <svg width="30" height="32" viewBox="0 0 30 32" fill="none">
          <path d="M1 14 5.500 2h1L11 14M2.500 10h7" stroke="#3f7ab5" strokeWidth="2" />
          <path d="M2 17.500h7.500L2 27h8.500" stroke="#8d5bb5" strokeWidth="2" />
          <path d="M12 8h17l-7 7v9h-3v-9z" fill="#777" />
          <path d="M20 15h1v8h-1z" fill="#fff" />
        </svg>
      }
    />
    <BigButton
      className="w-[44px]"
      lines={["Find &", "Select"]}
      icon={
        <svg width="28" height="30" viewBox="0 0 28 30" fill="none" stroke="#3f7ab5">
          <circle cx="17" cy="11" r="9.500" strokeWidth="2" fill="#fff" />
          <path d="M10 18.500 2 27.500" strokeWidth="4" />
        </svg>
      }
    />
  </Group>
);

const Ribbon = () => (
  <div className="flex h-[93px] border-b border-[#d2d2d2] bg-[#f1f1f1] text-[11px] text-[#3c3c3c]">
    <Clipboard />
    <FontGroup />
    <AlignGroup />
    <NumberGroup />
    <StylesGroup />
    <CellsGroup />
    <EditingGroup />
    <button aria-label="Collapse ribbon" className="ml-auto mr-[10px] self-end pb-[6px]">
      <svg width="9" height="6" viewBox="0 0 9 6" fill="none" stroke="#666" strokeWidth="1.600"><path d="M.5 5.500 4.500 1.500l4 4" /></svg>
    </button>
  </div>
);

const FormulaBar = () => (
  <div className="flex h-[45px] items-start bg-[#e6e6e6] pl-[5px] pr-[5px] pt-[10px] text-[12px] text-[#444]">
    <label className="relative block w-[102px]">
      <input aria-label="Name box" defaultValue="N2" className="h-[26px] w-full border border-[#c6c6c6] bg-white pl-[7px] outline-none" />
      <svg className="absolute right-[7px] top-[10px]" width="7" height="5" viewBox="0 0 7 5" fill="#666"><path d="M0 0h7L3.500 4.500z" /></svg>
    </label>
    <span className="flex h-[26px] w-[30px] flex-col items-center justify-center gap-[3px]">
      <i className="h-[2px] w-[2px] bg-[#a6a6a6]" />
      <i className="h-[2px] w-[2px] bg-[#a6a6a6]" />
      <i className="h-[2px] w-[2px] bg-[#a6a6a6]" />
    </span>
    <div className="flex h-[26px] w-[110px] items-center border border-[#c6c6c6] bg-white">
      <button aria-label="Cancel" className="flex w-[36px] justify-center">
        <svg width="11" height="10" viewBox="0 0 11 10" stroke="#b9b9b9" strokeWidth="1.800"><path d="M1 0l9 10M10 0 1 10" /></svg>
      </button>
      <button aria-label="Enter" className="flex w-[36px] justify-center">
        <svg width="12" height="10" viewBox="0 0 12 10" fill="none" stroke="#b9b9b9" strokeWidth="2.200"><path d="M1 5l3.500 4L11 1" /></svg>
      </button>
      <button aria-label="Insert function" className="w-[36px] font-['Liberation_Serif'] text-[15px] italic leading-none text-[#555]">
        f<span className="text-[11px] font-bold">x</span>
      </button>
    </div>
    <label className="relative ml-[3px] block flex-1">
      <input aria-label="Formula" defaultValue="Y" className="h-[26px] w-full border border-[#c6c6c6] bg-white pl-[11px] outline-none" />
      <svg className="absolute right-[6px] top-[11px]" width="8" height="5" viewBox="0 0 8 5" fill="none" stroke="#666" strokeWidth="1.800"><path d="M.5.500 4 4 7.500.5" /></svg>
    </label>
  </div>
);

/* ---------- Excel: document recovery ---------- */

const recovered = [
  ["Book1 (version 1).xlsb  [Aut...", "Version created from the l...", "5/10/2019 9:38 AM"],
  ["General_Process Assessme...", "Version created last time t...", "5/6/2019 8:01 PM"],
];

const RecoveryPane = () => (
  <aside className="flex w-[244px] shrink-0 flex-col bg-[#e6e6e6] pl-[14px] pr-[13px] pt-[14px] text-[11px] text-[#444]">
    <h2 className="whitespace-nowrap text-[20px] font-light leading-[28px] text-[#217346]">Document Recovery</h2>
    <p className="mt-[7px] whitespace-nowrap leading-[13px]">
      Excel has recovered the following files.
      <br />
      Save the ones you wish to keep.
    </p>
    <h3 className="mt-[16px] border-b border-[#c6c6c6] pb-px font-['Open_Sans'] text-[11px] font-bold leading-[14px]">Available Files</h3>
    <ul className="ml-[9px] mt-[4px] flex-1 border border-[#ababab] bg-white pl-[11px] pt-[5px] text-black">
      {recovered.map((lines) => (
        <li key={lines[0]} className="mb-[25px] flex gap-[10px]">
          <ExcelIcon size={16} />
          <div className="whitespace-pre leading-[15px]">
            {lines.map((l) => (
              <div key={l}>{l}</div>
            ))}
          </div>
        </li>
      ))}
    </ul>
    <a href="#help" className="mt-[56px] flex items-center gap-[6px] text-[#2f6ca8]">
      <span className="flex h-4 w-4 items-center justify-center rounded-full bg-[#3f7ab5] text-[13px] font-bold leading-none text-white">?</span>
      Which file do I want to save?
    </a>
    <button className="mb-[13px] mt-[7px] h-[23px] w-[46px] self-end border border-[#ababab] bg-[#fdfdfd]">Close</button>
  </aside>
);

/* ---------- Excel: sheet ---------- */

const columns: [string, string][] = [
  ["A", "w-[26px]"],
  ["B", "w-[222px]"],
  ["C", "w-[190px]"],
  ["D", "w-[54px]"],
  ["E", "w-[54px]"],
  ["F", "w-[54px]"],
  ["G", "w-[151px]"],
  ["H", "w-[54px]"],
  ["I", "w-[54px]"],
  ["J", "w-[54px]"],
  ["K", "w-[128px]"],
  ["L", "w-[121px]"],
  ["M", "w-[121px]"],
  ["N", "w-[95px]"],
  ["O", "w-[113px]"],
  ["P", "w-[68px]"],
  ["", ""],
];

const data: string[][] = [
  ["No.", "Debtor name", "Job code", "Progress/F", "ITB", "Contact pe", "WBS code", "Country", "Receiving", "Receiving", "Currency", "Addresse F/N", "Addresse L/N", "OPE", "OPE Amount", "OPE VAT", "T"],
  ["", "ccc", "2342", "Progress", "N/A", "N/A", "N/A", "N/A", "N/A", "N/A", "PHP", "Joeben", "", "Y", "5,000.00", "600.00", ""],
  ["4", "Royal Caribbean Cruises (Asia) Pte. Ltd. -", "A018", "Progress", "N", "N/A", "N/A", "N/A", "N/A", "N/A", "PHP", "Joven", "", "Y", "5,000.00", "600.00", ""],
  ["5", "Grand Taipan", "J018", "Progress", "N", "N/A", "N/A", "N/A", "N/A", "N/A", "PHP", "Joeben", "", "Y", "6,000.00", "720.00", ""],
  ["6", "Hell Energy Drink Philippines", "A018", "Progress", "N", "N/A", "N/A", "N/A", "N/A", "N/A", "PHP", "Francis", "", "Y", "2,000.00", "240.00", ""],
  ["7", "RKO BDM Makati, Inc.", "A018", "Progress", "N", "N/A", "N/A", "N/A", "N/A", "N/A", "PHP", "Armand", "", "N", "", "", ""],
  ["1", "", "", "Progress", "N", "N/A", "N/A", "N/A", "N/A", "N/A", "PHP", "", "", "Y", "10,000.00", "1,200.00", ""],
];
for (let r = 8; r <= 48; r++) data.push([String(r + 1), ...Array(16).fill("")]);

const cellClass = (r: number, c: number) => {
  if (r === 0 && c > 0) return "font-['Lato'] font-bold";
  if (r === 1 && (c === 1 || c === 2)) return c === 2 ? "text-right font-['Lato'] font-bold" : "font-['Lato'] font-bold";
  if (r > 0 && c >= 14) return "text-right";
  if (c === 0 && r > 0 && r < 7 && r !== 5) return "text-right";
  return "";
};

const Sheet = () => (
  <table className="w-full table-fixed border-separate border-spacing-0 border-l border-[#ababab] text-[11px] text-black">
    <thead>
      <tr className="h-[17px] bg-[#e6e6e6] leading-4">
        <th scope="col" className="w-[23px] border-b border-r border-[#9b9b9b] p-0">
          <svg className="ml-auto mr-[3px]" width="8" height="8" viewBox="0 0 8 8" fill="#b3b3b3"><path d="M8 0v8H0z" /></svg>
        </th>
        {columns.map(([c, w]) => (
          <th key={c} scope="col" className={`border-b border-r border-b-[#9b9b9b] border-r-[#b8b8b8] p-0 font-normal text-[#222] ${w}`}>
            {c}
          </th>
        ))}
      </tr>
    </thead>
    <tbody>
      {data.map((row, r) => (
        <tr key={r} className={r < 2 ? "h-4 leading-[15px]" : "h-[17px] leading-4"}>
          <th scope="row" className="border-b border-r border-b-[#b8b8b8] border-r-[#9b9b9b] bg-[#e6e6e6] p-0 font-normal text-[#222]">
            {r + 1}
          </th>
          {row.map((v, c) => (
            <td
              key={c}
              className={`relative overflow-hidden whitespace-nowrap border-b border-r border-[#d4d4d4] bg-white px-[2px] py-0 ${cellClass(r, c)}`}
            >
              {v}
              {r === 5 && c === 14 && (
                <svg className="absolute left-0 top-0" width="5" height="5" viewBox="0 0 5 5" fill="#0a7a1c"><path d="M0 0h5L0 5z" /></svg>
              )}
            </td>
          ))}
        </tr>
      ))}
    </tbody>
  </table>
);

const VScroll = () => (
  <div className="ml-[3px] mr-[3px] mt-[3px] flex w-[15px] shrink-0 flex-col bg-[#dadada]">
    <button aria-label="Scroll up" className="flex h-[15px] items-center justify-center border border-[#ababab] bg-white">
      <svg width="7" height="4" viewBox="0 0 7 4" fill="#666"><path d="M0 4h7L3.500 0z" /></svg>
    </button>
    <div className="mb-[17px] flex-1 border border-[#ababab] bg-white" />
    <button aria-label="Scroll down" className="flex h-[15px] items-center justify-center border border-[#ababab] bg-white">
      <svg width="7" height="4" viewBox="0 0 7 4" fill="#666"><path d="M0 0h7L3.500 4z" /></svg>
    </button>
  </div>
);

const SheetTabs = () => (
  <div className="flex h-[28px] items-start border-l border-t border-[#9b9b9b] bg-[#e6e6e6] text-[12px] text-[#444]">
    <div className="flex h-6 w-[100px] items-center gap-[25px] pl-[27px]">
      <svg width="4" height="7" viewBox="0 0 4 7" fill="#bdbdbd"><path d="M4 0v7L0 3.500z" /></svg>
      <svg width="4" height="7" viewBox="0 0 4 7" fill="#bdbdbd"><path d="M0 0v7l4-3.500z" /></svg>
    </div>
    <button className="h-[23px] w-[81px] whitespace-nowrap border-l border-[#ababab]">READ ME</button>
    <button className="-mt-px h-[25px] w-[84px] border-b-2 border-x border-b-[#217346] border-x-[#ababab] bg-white font-['Open_Sans'] font-bold text-[#217346]">ForBilling</button>
    <button className="h-[23px] w-[159px] whitespace-nowrap border-r border-[#ababab]">Data Validation Sheet</button>
    <button aria-label="New sheet" className="ml-[33px] mt-[4px]">
      <svg width="16" height="16" viewBox="0 0 16 16" fill="none" stroke="#6b6b6b"><circle cx="8" cy="8" r="7.500" /><path d="M8 4v8M4 8h8" strokeWidth="1.800" /></svg>
    </button>
    <div className="ml-auto mr-[21px] mt-[6px] flex w-[625px] items-center gap-[16px]">
      <svg width="2" height="11" viewBox="0 0 2 11" fill="#a6a6a6"><path d="M0 0h2v2H0zM0 4.500h2v2H0zM0 9h2v2H0z" /></svg>
      <div className="flex h-[15px] flex-1 bg-[#dadada]">
        <button aria-label="Scroll left" className="flex w-[15px] items-center justify-center border border-[#ababab] bg-white">
          <svg width="4" height="7" viewBox="0 0 4 7" fill="#666"><path d="M4 0v7L0 3.500z" /></svg>
        </button>
        <span className="w-[161px] border border-[#ababab] bg-white" />
        <button aria-label="Scroll right" className="ml-auto flex w-[15px] items-center justify-center border border-[#ababab] bg-white">
          <svg width="4" height="7" viewBox="0 0 4 7" fill="#666"><path d="M0 0v7l4-3.500z" /></svg>
        </button>
      </div>
    </div>
  </div>
);

const StatusBar = () => (
  <footer className="flex h-[23px] shrink-0 items-center border-b border-t border-b-[#8a8a8a] border-t-[#c6c6c6] bg-[#f1f1f1] pl-[7px] text-[11px] text-[#444]">
    Ready
    <svg className="ml-[20px]" width="14" height="13" viewBox="0 0 14 13" fill="none" stroke="#777">
      <path d="M1.500 4v8.500h12v-11H6M3.500 5.500h8M3.500 7.500h8M3.500 9.500h8" />
      <path d="M6 2.500h7" strokeWidth="2" />
      <circle cx="3" cy="3" r="2.800" fill="#777" stroke="none" />
    </svg>
    <div className="ml-auto flex h-full items-center">
      <button aria-label="Normal view" className="flex h-full w-[38px] items-center justify-center bg-[#c8c8c8]">
        <svg width="13" height="13" viewBox="0 0 13 13" fill="none" stroke="#555"><path d="M.5.500h12v12H.5zM4.500 0v13M8.500 0v13M0 4.500h13M0 8.500h13" /></svg>
      </button>
      <button aria-label="Page layout view" className="flex w-[38px] justify-center">
        <svg width="13" height="13" viewBox="0 0 13 13" fill="none" stroke="#666"><path d="M.5.500h12v12H.5zM3.500 2.500h6v8h-6zM5 4.500h3M5 6.500h3M5 8.500h3" /></svg>
      </button>
      <button aria-label="Page break preview" className="flex w-[38px] justify-center">
        <svg width="13" height="13" viewBox="0 0 13 13" fill="none" stroke="#666"><path d="M.5.500h12v12H.5zM4.500 1v7M8.500 1v7H1" /></svg>
      </button>
      <button aria-label="Zoom out" className="ml-[8px] h-[2px] w-[6px] bg-[#555]" />
      <input
        type="range"
        aria-label="Zoom"
        defaultValue={42}
        className="mx-[5px] h-[14px] w-[100px] appearance-none bg-transparent [&::-webkit-slider-runnable-track]:h-px [&::-webkit-slider-runnable-track]:bg-[#a0a0a0] [&::-webkit-slider-thumb]:-mt-[5px] [&::-webkit-slider-thumb]:h-[11px] [&::-webkit-slider-thumb]:w-[4px] [&::-webkit-slider-thumb]:appearance-none [&::-webkit-slider-thumb]:bg-[#555]"
      />
      <button aria-label="Zoom in">
        <svg width="8" height="8" viewBox="0 0 8 8" stroke="#555" strokeWidth="1.800"><path d="M4 0v8M0 4h8" /></svg>
      </button>
      <span className="w-[43px] pl-[14px]">85%</span>
    </div>
  </footer>
);

const Excel = () => (
  <main className="flex min-w-0 flex-1 flex-col bg-[#e6e6e6]">
    <TitleBar />
    <TabRow />
    <Ribbon />
    <FormulaBar />
    <div className="flex flex-1">
      <RecoveryPane />
      <div className="flex min-w-0 flex-1 flex-col">
        <div className="flex">
          <div className="min-w-0 flex-1"><Sheet /></div>
          <VScroll />
        </div>
        <SheetTabs />
      </div>
    </div>
    <StatusBar />
  </main>
);

/* ---------- Internet Explorer ---------- */

const Browser = () => (
  <main className="flex flex-1 flex-col bg-white text-[11px] text-black">
    <header className="bg-[#f8c222]">
      <div className="flex h-[27px] items-center justify-end gap-[35px] pr-[20px] pt-[2px]">
        <button aria-label="Minimize"><svg width="10" height="11" viewBox="0 0 10 11" stroke="#000"><path d="M0 6.500h10" /></svg></button>
        <button aria-label="Restore"><svg width="11" height="11" viewBox="0 0 11 11" fill="none" stroke="#000"><path d="M.5 2.500h8v8h-8zM2.500 2.500v-2h8v8h-2" /></svg></button>
        <button aria-label="Close"><svg width="11" height="11" viewBox="0 0 11 11" stroke="#000"><path d="M.5.500l10 10M10.500.500l-10 10" /></svg></button>
      </div>
      <div className="flex h-[27px] items-start">
        <button aria-label="Back" className="-mt-[7px] ml-px">
          <svg width="38" height="34" viewBox="0 0 38 34" fill="none">
            <circle cx="19" cy="19" r="18.300" stroke="#b78d1c" strokeWidth="1.200" />
            <path d="M29.500 17v4H16.500l5 5-2.500 2.500-9-9.500 9-9.500 2.500 2.500-5 5z" fill="#fde49a" stroke="#b78d1c" />
          </svg>
        </button>
        <button aria-label="Forward" className="-mt-px ml-[3px]">
          <svg width="26" height="26" viewBox="0 0 26 26" fill="none">
            <circle cx="13" cy="13" r="12.400" stroke="#b78d1c" strokeWidth="1.200" />
            <path d="M6 11.500v3h9l-3.500 3.500 2 2 7-7-7-7-2 2 3.500 3.500z" fill="#fde49a" stroke="#b78d1c" />
          </svg>
        </button>
        <div className="ml-[3px] flex h-6 flex-1 items-center border border-[#ae8a25] bg-[#fde8ae] pl-[3px]">
          <IeIcon size={16} />
          <input aria-label="Address" defaultValue="about:blank" className="min-w-0 flex-1 bg-transparent pl-[5px] outline-none" />
          <button aria-label="Address history" className="mr-[8px]"><Caret /></button>
          <button aria-label="Refresh" className="mr-[5px]">
            <svg width="12" height="13" viewBox="0 0 12 13" fill="none" stroke="#7c7045" strokeWidth="2"><path d="M9.500 4A4.500 4.500 0 1 0 10 8M10 0v4.500H5.500" /></svg>
          </button>
        </div>
        <div className="ml-[6px] flex h-6 w-[478px] items-center border border-[#ae8a25] bg-[#fde8ae] pl-1">
          <input aria-label="Search" defaultValue="Search..." className="min-w-0 flex-1 bg-transparent pl-[3px] outline-none" />
          <button aria-label="Run search" className="mr-[6px]">
            <svg width="14" height="14" viewBox="0 0 14 14" fill="none" stroke="#7c7045" strokeWidth="1.700"><circle cx="8.500" cy="5" r="4" /><path d="M5.500 8 1 13" strokeWidth="2.200" /></svg>
          </button>
          <button aria-label="Search options" className="mr-[9px]"><Caret /></button>
        </div>
        <div className="flex gap-[9px] pl-[13px] pr-[7px] pt-1">
          <button aria-label="Home"><svg width="16" height="17" viewBox="0 0 16 17" fill="#fff" stroke="#8f7430"><path d="M11 2.500v-1h2.500V6l2 2.500-1 1-1-.5v7H9.500v-5h-3v5h-4V9l-1 .5-1-1L8 1z" /></svg></button>
          <button aria-label="Favorites"><svg width="17" height="17" viewBox="0 0 17 17" fill="#fff" stroke="#8f7430"><path d="M8.500.8l2 5.700h6L11.700 10l1.900 6-5.100-3.500L3.400 16l1.900-6L.5 6.500h6z" /></svg></button>
          <button aria-label="Tools">
            <svg width="17" height="17" viewBox="0 0 17 17" fill="none">
              <circle cx="8.500" cy="8.500" r="6.500" stroke="#8f7430" strokeWidth="4" strokeDasharray="3.400 1.700" />
              <circle cx="8.500" cy="8.500" r="5" stroke="#8f7430" strokeWidth="3.600" />
              <circle cx="8.500" cy="8.500" r="6.500" stroke="#fff" strokeWidth="2.600" strokeDasharray="2.200 2.900" strokeDashoffset="-.6" />
              <circle cx="8.500" cy="8.500" r="4.900" stroke="#fff" strokeWidth="2.200" />
            </svg>
          </button>
        </div>
      </div>
      <div className="flex h-6 items-stretch border-b border-[#f8c222] bg-gradient-to-b from-[#f8c222] to-[#eac65c]">
        <button className="flex w-[200px] items-center gap-[5px] border-l border-t border-[#ae8a25] bg-[#dcc682] pl-[5px] text-[#3d3826]">
          <IeIcon size={16} />
          Blank Page
        </button>
        <div className="flex w-[201px] items-center gap-[5px] border-x border-t border-[#ae8a25] bg-white pl-[4px]">
          <IeIcon size={16} />
          <button>Blank Page</button>
          <button aria-label="Close tab" className="ml-auto mr-[6px]">
            <svg width="8" height="8" viewBox="0 0 8 8" stroke="#a2a2a2" strokeWidth="2"><path d="M.5.500l7 7M7.500.500l-7 7" /></svg>
          </button>
        </div>
        <button aria-label="New tab" className="flex w-[22px] items-center justify-center border-r border-t border-[#ae8a25] bg-[#dcc682]">
          <svg width="14" height="15" viewBox="0 0 14 15"><path d="M.5 2.500h11v12H.5z" fill="#fbfbfb" stroke="#9a9a9a" /><path d="M10.500 0v7M7 3.500h7M8 1l5 5M13 1 8 6" stroke="#f5a01e" strokeWidth="1.100" /></svg>
        </button>
      </div>
    </header>
  </main>
);

export default function App() {
  return (
    <div className="flex min-h-screen bg-white font-['Noto_Sans',sans-serif]">
      <div className="flex w-1/2">
        <SideTaskbar />
        <Excel />
      </div>
      <div className="flex w-1/2 flex-col">
        <Browser />
        <BottomTaskbar />
      </div>
    </div>
  );
}
